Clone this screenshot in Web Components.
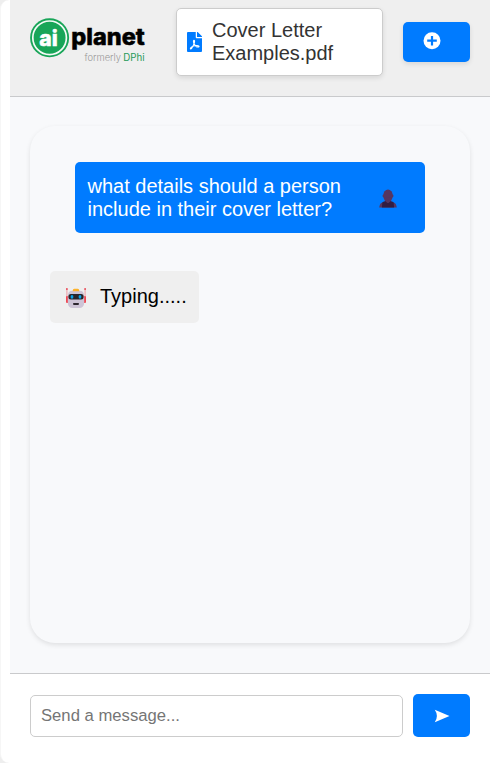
<!DOCTYPE html>
<html lang="en">
<head>
<meta charset="utf-8">
<title>AI Planet Chat</title>
<style>
body{margin:0;background:#fff;font-family:"Liberation Sans",Arial,sans-serif;overflow:hidden}
</style>
</head>
<body>
<chat-app></chat-app>
<script>
const define = (name, html) => {
  const t = document.createElement('template');
  t.innerHTML = html;
  customElements.define(name, class extends HTMLElement {
    constructor() {
      super();
      this.attachShadow({ mode: 'open' }).append(t.content.cloneNode(true));
    }
  });
};

define('brand-logo', `
<style>:host{display:block;width:116px;height:46px}svg{display:block;overflow:visible}</style>
<svg width="116" height="46" viewBox="0 0 116 46">
  <circle cx="19.6" cy="19.8" r="19.5" fill="#18a558"/>
  <circle cx="19.6" cy="19.8" r="16.8" fill="none" stroke="#f4faf6" stroke-width="1.7"/>
  <text x="9.300" y="27.5" font-family="Inter,sans-serif" font-weight="800" font-size="22" textLength="18.500" lengthAdjust="spacingAndGlyphs" fill="#fff" stroke="#fff" stroke-width=".5">ai</text>
  <text x="41.300" y="27.300" font-family="Inter,sans-serif" font-weight="800" font-size="22.500" textLength="73.500" lengthAdjust="spacingAndGlyphs" fill="#000" stroke="#000" stroke-width=".5">planet</text>
  <text x="54.5" y="42.5" font-family="Inter,sans-serif" font-weight="300" font-size="9.800" textLength="36.5" lengthAdjust="spacingAndGlyphs" fill="#999">formerly</text>
  <text x="93.3" y="42.5" font-family="Inter,sans-serif" font-size="9.800" textLength="21.3" lengthAdjust="spacingAndGlyphs" fill="#279a59">DPhi</text>
</svg>`);

define('file-card', `
<style>
:host{display:flex;align-items:center;box-sizing:border-box;width:207px;height:68px;padding:0 10px;gap:10px;background:#fff;border:1px solid #ccc;border-radius:5px;box-shadow:0 2px 5px rgba(0,0,0,.1);font-size:20px;line-height:23px;color:#333}
svg{flex:none;margin-top:-1px}
</style>
<svg width="15" height="20" viewBox="0 0 384 512"><path fill="#007bff" d="M24 0H224V136q0 24 24 24H384V488q0 24-24 24H24q-24 0-24-24V24Q0 0 24 0ZM256 0h7q10 0 17 7l97 98q7 7 7 17v6H256Z"/><path fill="none" stroke="#fff" stroke-width="29" stroke-linejoin="round" d="M179 215c-22 0-12 59 4 91 23 47 66 79 103 78 44-1 17-43-41-39-61 4-130 28-153 68-14 25 9 29 28 2 31-45 62-104 70-149 5-30 5-51-11-51Z"/></svg>
<span><slot></slot></span>`);

define('new-button', `
<style>:host{display:flex;align-items:center;box-sizing:border-box;width:67px;height:40px;padding:0 20px 2px;background:#007bff;border-radius:5px;box-shadow:0 2px 5px rgba(0,0,0,.1)}</style>
<svg width="18" height="18" viewBox="0 0 18 18"><circle cx="9" cy="8.700" r="8.5" fill="#fff"/><path d="M9 4v9.600M4.2 8.700h9.600" stroke="#007bff" stroke-width="2.2"/></svg>`);

define('app-header', `
<style>
:host{display:flex;box-sizing:border-box;height:97px;padding:8px 20px 0;background:#efefef;border-bottom:1px solid #c9cacc;align-items:flex-start}
brand-logo{margin-top:9.5px}
file-card{margin-left:30px}
new-button{margin:14px 0 0 20px}
</style>
<brand-logo></brand-logo><file-card>Cover Letter Examples.pdf</file-card><new-button></new-button>`);

define('user-icon', `
<style>:host{display:block;width:18px;height:19px}svg{display:block}</style>
<svg width="18" height="19" viewBox="0 0 18 19"><path fill="#563661" d="M5.8 10h6.4v3l3 .8q2 .8 2.6 4.700H.2Q.8 14.600 2.800 13.800l3-.8Z"/><path fill="#321d43" d="M3.400 13.200q1.600-.7 3.100-.9 2.500 2.300 5 0 1.500.2 3.100.9l.5 5.300H2.900Z"/><ellipse cx="9" cy="6.600" rx="4.800" ry="6.200" fill="#563661"/><rect x="3.600" y="5.500" width="10.800" height="2.800" rx="1" fill="#563661"/><path fill="#563661" d="M7.200 11h3.600v2L9 14.300l-1.800-1.300Z"/></svg>`);

define('bot-icon', `
<style>:host{display:block;width:20px;height:20px}svg{display:block}</style>
<svg width="20" height="20" viewBox="0 0 20 20">
<path d="M.9 1v9M19.100 1v9" stroke="#ef929b" stroke-width=".9"/>
<circle cx=".9" cy="1" r=".9" fill="#e84350"/><circle cx="19.100" cy="1" r=".9" fill="#e84350"/>
<rect y="8" width="2.300" height="7" rx="1.100" fill="#ef4854"/><rect x="17.700" y="8" width="2.300" height="7" rx="1.100" fill="#ef4854"/>
<path fill="#cdc4d6" d="M6.500 2.800h7q4.700 0 4.700 5.200v6q0 6-5 6H6.800q-5 0-5-6V8q0-5.200 4.700-5.200Z"/>
<path fill="#fdb32b" d="M6.600 3.200q.2-2.400 1.800-2.400h3.200q1.600 0 1.800 2.400Z"/>
<rect x="2.400" y="6" width="15.200" height="5.600" rx="2.500" fill="#292529"/>
<ellipse cx="6" cy="8.800" rx="1.400" ry="1.900" fill="#08a2e8"/><ellipse cx="14" cy="8.800" rx="1.400" ry="1.900" fill="#08a2e8"/>
<rect x="7" y="14.900" width="6" height="2" rx=".8" fill="#2d272f"/>
</svg>`);

define('user-message', `
<style>
:host{display:flex;box-sizing:border-box;width:350px;height:71px;padding:13px 12.500px 12px;background:#007bff;color:#fff;border-radius:5px;font-size:20px;line-height:23px}
span{width:270px;flex:none}user-icon{margin:14px 0 0 21.500px}
</style>
<span><slot></slot></span><user-icon></user-icon>`);

define('bot-message', `
<style>
:host{display:flex;align-items:center;box-sizing:border-box;width:149px;height:52px;padding:0 12px 0 16px;gap:14px;background:#efefef;color:#000;border-radius:5px;font-size:20px;line-height:23px}
bot-icon{flex:none;margin-top:2px}span{margin-top:-1px}
</style>
<bot-icon></bot-icon><span><slot></slot></span>`);

define('chat-panel', `
<style>
:host{display:block;box-sizing:border-box;height:576px;padding:29px 20px 30px;background:#f8f9fb}
section{display:flex;flex-direction:column;align-items:flex-start;box-sizing:border-box;height:517px;padding:36px 20px;gap:38px;border-radius:25px;background:#f8f9fb;box-shadow:0 2px 5px rgba(0,0,0,.1)}
user-message{margin-left:25px}
</style>
<section><user-message>what details should a person include in their cover letter?</user-message><bot-message>Typing.....</bot-message></section>`);

define('message-form', `
<style>
:host{display:flex;box-sizing:border-box;height:90px;padding:20px 20px 0;gap:10px;background:#fff;border-top:1px solid #c9cacc}
input{display:block;box-sizing:border-box;width:373px;height:42px;margin:1px 0 0;padding:0 10px 1px;border:1px solid #ccc;border-radius:5px;font:16.670px "Liberation Sans",Arial,sans-serif;background:#fff}
input::placeholder{color:#757575;opacity:1}
button{display:flex;align-items:center;justify-content:center;width:57px;height:43px;padding:0;border:0;border-radius:5px;background:#007bff}
</style>
<input type="text" placeholder="Send a message..."><button aria-label="Send"><svg width="16" height="14" viewBox="0 0 16 14"><path fill="#fff" d="M.8.800 15.500 7 .8 13.200Q5 7 .8.800Z"/></svg></button>`);

define('chat-app', `
<style>:host{display:block;box-sizing:border-box;width:496px;height:763px;padding:0 6px 0 9px;background:#fff;border-left:1px solid #f6f6f6;border-radius:9px 0 0 9px;box-shadow:0 0 0 9px #eee}</style>
<app-header></app-header><chat-panel></chat-panel><message-form></message-form>`);
</script>
</body>
</html>
